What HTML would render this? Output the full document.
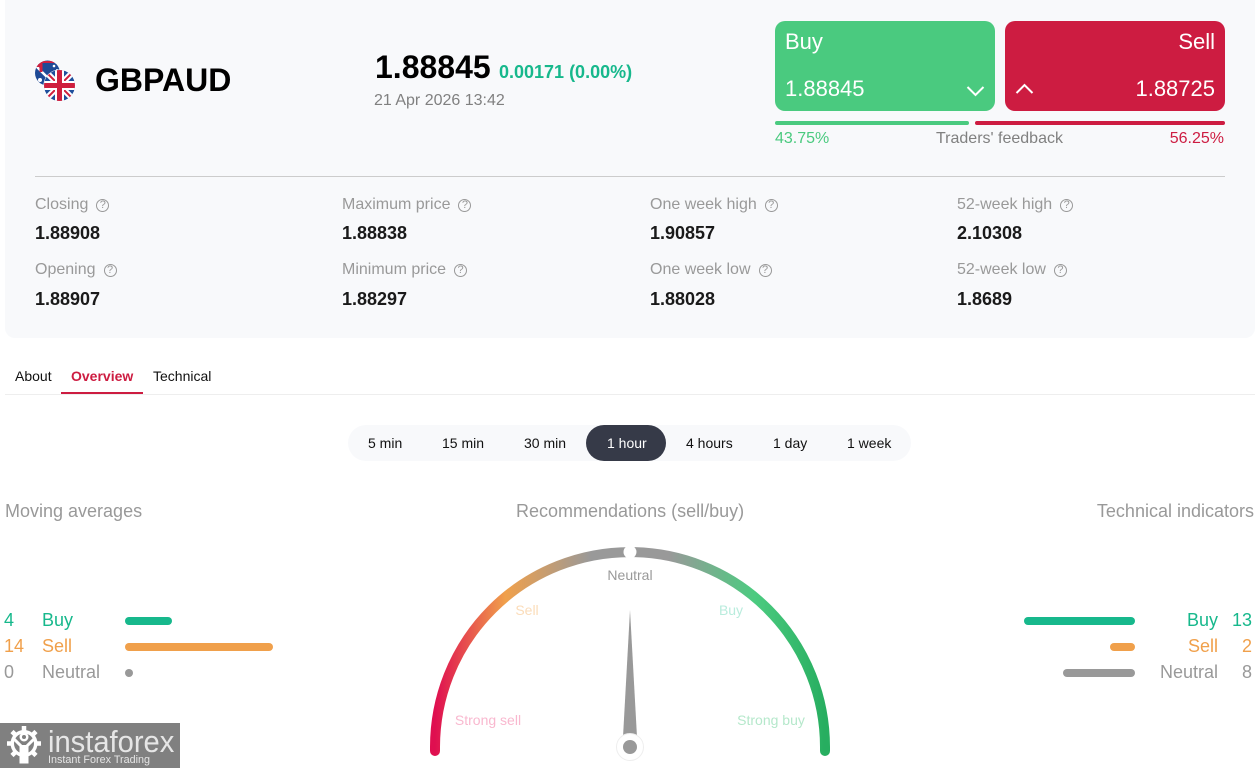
<!DOCTYPE html>
<html lang="en"><head><meta charset="utf-8"><title>GBPAUD</title>
<style>
html,body{margin:0;padding:0;background:#fff}
body{width:1259px;height:768px;position:relative;overflow:hidden;font-family:"Liberation Sans",Arial,sans-serif}
.a{position:absolute;white-space:nowrap}
.panel{left:5px;top:0;width:1250px;height:338px;background:#f8f9fb;border-radius:0 0 10px 10px}
.lb{font-size:16px;line-height:20px;color:#999}
.vl{font-size:18px;line-height:22px;font-weight:bold;color:#1a1a1a}
.q{display:inline-block;width:11px;height:11px;border:1.4px solid #999;border-radius:50%;font-size:11px;line-height:11px;text-align:center;color:#999;margin-left:8px;vertical-align:1px}
.box{top:21px;width:220px;height:90px;border-radius:10px}
.bx{font-size:22px;line-height:26px;color:#fff}
.tab{font-size:14px;line-height:18px;top:367px;color:#111}
.pill{font-size:14px;line-height:18px;top:434px;color:#111}
.h{font-size:18px;line-height:22px;color:#999;top:500px}
.li{font-size:18px;line-height:22px}
.bar{height:8px;border-radius:4px}
.g{font-size:14px;line-height:16px;transform:translateX(-50%)}
</style></head><body>
<div class="a panel"></div>

<svg class="a" style="left:30px;top:55px" width="50" height="50" viewBox="30 55 50 50">
<defs>
<clipPath id="au"><circle cx="47.5" cy="73" r="12.5"/></clipPath>
<clipPath id="uk"><circle cx="59.5" cy="85.5" r="15.5"/></clipPath>
</defs>
<g clip-path="url(#au)">
<rect x="34" y="60" width="28" height="27" fill="#1f4a96"/>
<path d="M36 66L48 78" stroke="#fff" stroke-width="2.500"/>
<path d="M36 67V61H56V63H40V67Z" fill="#d0203f"/>
<path d="M41 62V72" stroke="#d0203f" stroke-width="3"/>
<circle cx="40" cy="80" r="2" fill="#fff"/><circle cx="54" cy="66" r="1.300" fill="#fff"/><circle cx="57" cy="70" r="1" fill="#fff"/>
</g>
<circle cx="59.5" cy="85.5" r="16" fill="#fff"/>
<g clip-path="url(#uk)">
<rect x="44" y="70" width="31" height="31" fill="#1f4f9c"/>
<path d="M44 70L75 101M75 70L44 101" stroke="#fff" stroke-width="6"/>
<path d="M44 70L75 101M75 70L44 101" stroke="#cf1f3e" stroke-width="2"/>
<path d="M59.5 70V101M44 85.500H75" stroke="#fff" stroke-width="9"/>
<path d="M59.5 70V101M44 85.500H75" stroke="#cf1f3e" stroke-width="5"/>
</g>
</svg>

<div class="a" style="left:95px;top:62px;font-size:32px;line-height:37px;font-weight:bold;color:#000">GBPAUD</div>
<div class="a" style="left:375px;top:49px;font-size:32px;line-height:37px;font-weight:bold;color:#000">1.88845</div>
<div class="a" style="left:499px;top:61px;font-size:18px;line-height:22px;font-weight:bold;color:#17b88c">0.00171 (0.00%)</div>
<div class="a" style="left:374px;top:91px;font-size:16px;line-height:20px;color:#808080">21 Apr 2026 13:42</div>

<div class="a box" style="left:775px;background:#4aca7f"></div>
<div class="a box" style="left:1005px;background:#cd1c41"></div>
<div class="a bx" style="left:785px;top:29px">Buy</div>
<div class="a bx" style="left:785px;top:76px">1.88845</div>
<div class="a bx" style="right:44px;top:29px">Sell</div>
<div class="a bx" style="right:44px;top:76px">1.88725</div>
<svg class="a" style="left:966px;top:85px" width="20" height="12"><path d="M1.500 2L9.500 10L17.500 2" fill="none" stroke="#fff" stroke-width="2"/></svg>
<svg class="a" style="left:1015px;top:83px" width="20" height="12"><path d="M1.500 10L9.500 2L17.500 10" fill="none" stroke="#fff" stroke-width="2"/></svg>
<div class="a" style="left:775px;top:121px;width:194px;height:4px;border-radius:2px;background:#4aca7f"></div>
<div class="a" style="left:975px;top:121px;width:250px;height:4px;border-radius:2px;background:#cd1c41"></div>
<div class="a" style="left:775px;top:129px;font-size:16px;line-height:20px;color:#4aca7f">43.75%</div>
<div class="a" style="left:936px;top:129px;font-size:16px;line-height:20px;color:#808080">Traders' feedback</div>
<div class="a" style="right:35px;top:129px;font-size:16px;line-height:20px;color:#cd1c41">56.25%</div>

<div class="a" style="left:35px;top:176px;width:1190px;height:1px;background:#ccc"></div>

<div class="a lb" style="left:35px;top:195px">Closing<span class="q">?</span></div>
<div class="a vl" style="left:35px;top:222px">1.88908</div>
<div class="a lb" style="left:35px;top:260px">Opening<span class="q">?</span></div>
<div class="a vl" style="left:35px;top:288px">1.88907</div>
<div class="a lb" style="left:342px;top:195px">Maximum price<span class="q">?</span></div>
<div class="a vl" style="left:342px;top:222px">1.88838</div>
<div class="a lb" style="left:342px;top:260px">Minimum price<span class="q">?</span></div>
<div class="a vl" style="left:342px;top:288px">1.88297</div>
<div class="a lb" style="left:650px;top:195px">One week high<span class="q">?</span></div>
<div class="a vl" style="left:650px;top:222px">1.90857</div>
<div class="a lb" style="left:650px;top:260px">One week low<span class="q">?</span></div>
<div class="a vl" style="left:650px;top:288px">1.88028</div>
<div class="a lb" style="left:957px;top:195px">52-week high<span class="q">?</span></div>
<div class="a vl" style="left:957px;top:222px">2.10308</div>
<div class="a lb" style="left:957px;top:260px">52-week low<span class="q">?</span></div>
<div class="a vl" style="left:957px;top:288px">1.8689</div>

<div class="a tab" style="left:15px">About</div>
<div class="a tab" style="left:71px;font-weight:bold;color:#cd1c41">Overview</div>
<div class="a tab" style="left:153px">Technical</div>
<div class="a" style="left:5px;top:394px;width:1250px;height:1px;background:#eee"></div>
<div class="a" style="left:61px;top:392px;width:82px;height:2px;background:#cd1c41"></div>

<div class="a" style="left:348px;top:425px;width:563px;height:36px;border-radius:18px;background:#f8f9fb"></div>
<div class="a" style="left:586px;top:425px;width:80px;height:36px;border-radius:18px;background:#363a48"></div>
<div class="a pill" style="left:368px">5 min</div>
<div class="a pill" style="left:442px">15 min</div>
<div class="a pill" style="left:524px">30 min</div>
<div class="a pill" style="left:607px;color:#fff">1 hour</div>
<div class="a pill" style="left:686px">4 hours</div>
<div class="a pill" style="left:773px">1 day</div>
<div class="a pill" style="left:847px">1 week</div>

<div class="a h" style="left:5px">Moving averages</div>
<div class="a h" style="left:516px">Recommendations (sell/buy)</div>
<div class="a h" style="right:5px">Technical indicators</div>

<div class="a li" style="left:4px;top:609px;color:#17b88c">4</div>
<div class="a li" style="left:42px;top:609px;color:#17b88c">Buy</div>
<div class="a bar" style="left:125px;top:617px;width:47px;background:#17b88c"></div>
<div class="a li" style="left:4px;top:635px;color:#f0a04b">14</div>
<div class="a li" style="left:42px;top:635px;color:#f0a04b">Sell</div>
<div class="a bar" style="left:125px;top:643px;width:148px;background:#f0a04b"></div>
<div class="a li" style="left:4px;top:661px;color:#999">0</div>
<div class="a li" style="left:42px;top:661px;color:#999">Neutral</div>
<div class="a bar" style="left:125px;top:669px;width:8px;background:#999"></div>

<div class="a bar" style="left:1024px;top:617px;width:111px;background:#17b88c"></div>
<div class="a li" style="right:41px;top:609px;color:#17b88c">Buy</div>
<div class="a li" style="right:7px;top:609px;color:#17b88c">13</div>
<div class="a bar" style="left:1110px;top:643px;width:25px;background:#f0a04b"></div>
<div class="a li" style="right:41px;top:635px;color:#f0a04b">Sell</div>
<div class="a li" style="right:7px;top:635px;color:#f0a04b">2</div>
<div class="a bar" style="left:1063px;top:669px;width:72px;background:#999"></div>
<div class="a li" style="right:41px;top:661px;color:#999">Neutral</div>
<div class="a li" style="right:7px;top:661px;color:#999">8</div>

<svg class="a" style="left:420px;top:530px" width="420" height="238" viewBox="420 530 420 238">
<defs><linearGradient id="gr" gradientUnits="userSpaceOnUse" x1="435" y1="0" x2="825" y2="0">
<stop offset="0" stop-color="#df0f50"/><stop offset=".18" stop-color="#f0a04b"/><stop offset=".4" stop-color="#999"/><stop offset=".6" stop-color="#999"/><stop offset=".82" stop-color="#4ccb80"/><stop offset="1" stop-color="#27ae60"/>
</linearGradient></defs>
<path d="M435 751V747A195 195 0 0 1 825 747V751" fill="none" stroke="url(#gr)" stroke-width="10" stroke-linecap="round"/>
<circle cx="630" cy="552" r="6.500" fill="#fff"/>
<path d="M630 610L637 737H623Z" fill="#999"/>
<circle cx="630" cy="747" r="13.500" fill="#fff" stroke="#eee" stroke-width="1"/>
<circle cx="630" cy="747" r="7" fill="#999"/>
</svg>
<div class="a g" style="left:630px;top:567px;color:#999">Neutral</div>
<div class="a g" style="left:527px;top:602px;color:#fbdcb9">Sell</div>
<div class="a g" style="left:731px;top:602px;color:#b9ecdd">Buy</div>
<div class="a g" style="left:488px;top:712px;color:#f9b8cf">Strong sell</div>
<div class="a g" style="left:771px;top:712px;color:#b5e8cb">Strong buy</div>

<div class="a" style="left:0;top:723px;width:180px;height:45px;background:#808080"></div>
<svg class="a" style="left:5px;top:723px" width="40" height="42" viewBox="5 723 40 42">
<g fill="#fff">
<circle cx="24" cy="743.500" r="13.500"/>
<g stroke="#fff" stroke-width="4.500">
<path d="M24 726V761M7 743.500H41M12 731.500L36 755.500M36 731.500L12 755.500"/>
</g>
</g>
<circle cx="24" cy="743.500" r="10" fill="#808080"/>
<circle cx="24" cy="737" r="4.500" fill="#fff"/><circle cx="24" cy="737" r="2" fill="#808080"/>
<path d="M13 738L21 746V762H27V746L35 738" fill="none" stroke="#fff" stroke-width="3"/>
<rect x="22" y="745" width="4" height="18" fill="#fff"/>
</svg>
<div class="a" style="left:48px;top:724px;font-size:31px;line-height:36px;color:#e6e6e6;transform:scaleX(.94);transform-origin:0 0">instaforex</div>
<div class="a" style="left:48px;top:753px;font-size:10.800px;line-height:14px;color:#e4e4e4">Instant Forex Trading</div>
</body></html>
